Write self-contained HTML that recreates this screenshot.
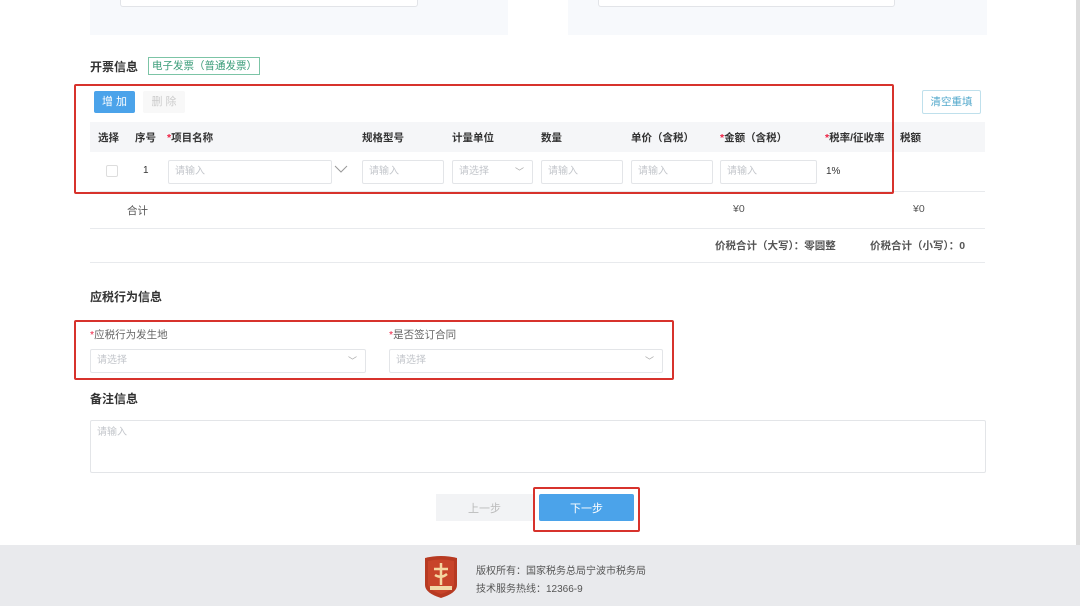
<!DOCTYPE html>
<html><head><meta charset="utf-8"><style>
*{margin:0;padding:0;box-sizing:border-box}
body{width:1080px;height:606px;background:#fff;position:relative;overflow:hidden;font-family:"Liberation Sans","Noto Sans CJK SC",sans-serif;font-size:11px;color:#333}
.a{position:absolute}
.panel{background:#f7f9fc}
.inp{position:absolute;border:1px solid #e3e5e8;background:#fff;border-radius:2px;color:#c3c6cb;font-size:10px;padding-left:6px;line-height:22px}
.h{position:absolute;font-weight:bold;font-size:10.5px;color:#333;top:130px}
.red{position:absolute;border:2px solid #d7322c;border-radius:2px}
.line{position:absolute;left:90px;width:895px;height:1px;background:#e8eaed}
.req{color:#e24}
.chev{position:absolute;right:8px;top:0;color:#aaa;font-size:9px}
</style></head><body>
<div class="a panel" style="left:90px;top:0;width:418px;height:35px"></div>
<div class="a" style="left:120px;top:0;width:298px;height:7px;background:#fff;border:1px solid #e2e4e8;border-top:none;border-radius:0 0 3px 3px"></div>
<div class="a panel" style="left:568px;top:0;width:419px;height:35px"></div>
<div class="a" style="left:598px;top:0;width:297px;height:7px;background:#fff;border:1px solid #e2e4e8;border-top:none;border-radius:0 0 3px 3px"></div>
<div class="a" style="left:1076px;top:0;width:4px;height:545px;background:#dcdcdc"></div>

<div class="a" style="left:90px;top:58px;font-weight:bold;font-size:12px">开票信息</div>
<div class="a" style="left:148px;top:57px;width:112px;height:18px;border:1px solid #7cc4a6;color:#3a9c78;font-size:10.5px;line-height:16px;padding-left:3px">电子发票（普通发票）</div>

<div class="a" style="left:94px;top:91px;width:41px;height:22px;background:#4ba3ea;color:#fff;font-size:11px;line-height:22px;text-align:center;border-radius:2px">增 加</div>
<div class="a" style="left:143px;top:91px;width:42px;height:22px;background:#f8f8f8;color:#ccc;font-size:11px;line-height:22px;text-align:center;border-radius:2px">删 除</div>
<div class="a" style="left:922px;top:90px;width:59px;height:24px;border:1px solid #bfe0ec;color:#55aacc;font-size:10.5px;line-height:22px;text-align:center;border-radius:2px">清空重填</div>

<div class="a" style="left:90px;top:122px;width:895px;height:30px;background:#f5f6f8"></div>
<div class="h" style="left:98px">选择</div>
<div class="h" style="left:135px">序号</div>
<div class="h" style="left:167px"><span class="req">*</span>项目名称</div>
<div class="h" style="left:362px">规格型号</div>
<div class="h" style="left:452px">计量单位</div>
<div class="h" style="left:541px">数量</div>
<div class="h" style="left:631px">单价（含税）</div>
<div class="h" style="left:720px"><span class="req">*</span>金额（含税）</div>
<div class="h" style="left:825px"><span class="req">*</span>税率/征收率</div>
<div class="h" style="left:900px">税额</div>

<div class="a" style="left:106px;top:165px;width:12px;height:12px;border:1px solid #ddd;border-radius:2px"></div>
<div class="a" style="left:143px;top:165px;font-size:10px">1</div>
<div class="inp" style="left:168px;top:160px;width:164px;height:24px">请输入</div>
<svg class="a" style="left:334px;top:165px" width="14" height="8"><path d="M1 1 L7 7 L13 1" stroke="#999" fill="none"/></svg>
<div class="inp" style="left:362px;top:160px;width:82px;height:24px">请输入</div>
<div class="inp" style="left:452px;top:160px;width:81px;height:24px">请选择<span class="chev">﹀</span></div>
<div class="inp" style="left:541px;top:160px;width:82px;height:24px">请输入</div>
<div class="inp" style="left:631px;top:160px;width:82px;height:24px">请输入</div>
<div class="inp" style="left:720px;top:160px;width:97px;height:24px">请输入</div>
<div class="a" style="left:826px;top:166px;font-size:10px">1%</div>
<div class="line" style="top:191px"></div>
<div class="a" style="left:127px;top:203px;font-size:10.5px;color:#555">合计</div>
<div class="a" style="left:733px;top:203px;font-size:10.5px;color:#555">¥0</div>
<div class="a" style="left:913px;top:203px;font-size:10.5px;color:#555">¥0</div>
<div class="line" style="top:228px"></div>
<div class="a" style="left:715px;top:238px;font-size:10.5px;font-weight:bold;color:#555">价税合计（大写）：零圆整</div>
<div class="a" style="left:870px;top:238px;font-size:10.5px;font-weight:bold;color:#555">价税合计（小写）：0</div>
<div class="line" style="top:262px"></div>

<div class="red" style="left:74px;top:84px;width:820px;height:110px"></div>

<div class="a" style="left:90px;top:288px;font-weight:bold;font-size:12px">应税行为信息</div>
<div class="a" style="left:90px;top:327px;font-size:10.5px;color:#666"><span class="req">*</span>应税行为发生地</div>
<div class="a" style="left:389px;top:327px;font-size:10.5px;color:#666"><span class="req">*</span>是否签订合同</div>
<div class="inp" style="left:90px;top:349px;width:276px;height:24px">请选择<span class="chev">﹀</span></div>
<div class="inp" style="left:389px;top:349px;width:274px;height:24px">请选择<span class="chev">﹀</span></div>
<div class="red" style="left:74px;top:320px;width:600px;height:60px"></div>

<div class="a" style="left:90px;top:390px;font-weight:bold;font-size:12px">备注信息</div>
<div class="inp" style="left:90px;top:420px;width:896px;height:53px;line-height:24px">请输入</div>

<div class="a" style="left:436px;top:494px;width:97px;height:27px;background:#f2f3f5;color:#bbb;text-align:center;line-height:30px;font-size:11px">上一步</div>
<div class="a" style="left:539px;top:494px;width:95px;height:27px;background:#4ba3ea;color:#fff;text-align:center;line-height:30px;font-size:11px;border-radius:2px">下一步</div>
<div class="red" style="left:533px;top:487px;width:107px;height:45px"></div>

<div class="a" style="left:0;top:545px;width:1080px;height:61px;background:#e9eaed"></div>
<svg class="a" style="left:423px;top:555px" width="36" height="44" viewBox="0 0 36 44"><path d="M2 3 Q18 -1 34 3 L34 30 Q34 38 18 43 Q2 38 2 30Z" fill="#b73a22"/><path d="M5 6 Q18 3 31 6 L31 29 Q31 35 18 39 Q5 35 5 29Z" fill="#c8442a"/><path d="M18 8 V30 M11 14 H25 M12 20 Q18 24 24 19" stroke="#f5d6a0" stroke-width="2.5" fill="none"/><rect x="7" y="31" width="22" height="4" fill="#f1d9a8"/></svg>
<div class="a" style="left:476px;top:562px;font-size:10px;color:#555">版权所有：国家税务总局宁波市税务局</div>
<div class="a" style="left:476px;top:580px;font-size:10px;color:#555">技术服务热线：12366-9</div>
</body></html>
